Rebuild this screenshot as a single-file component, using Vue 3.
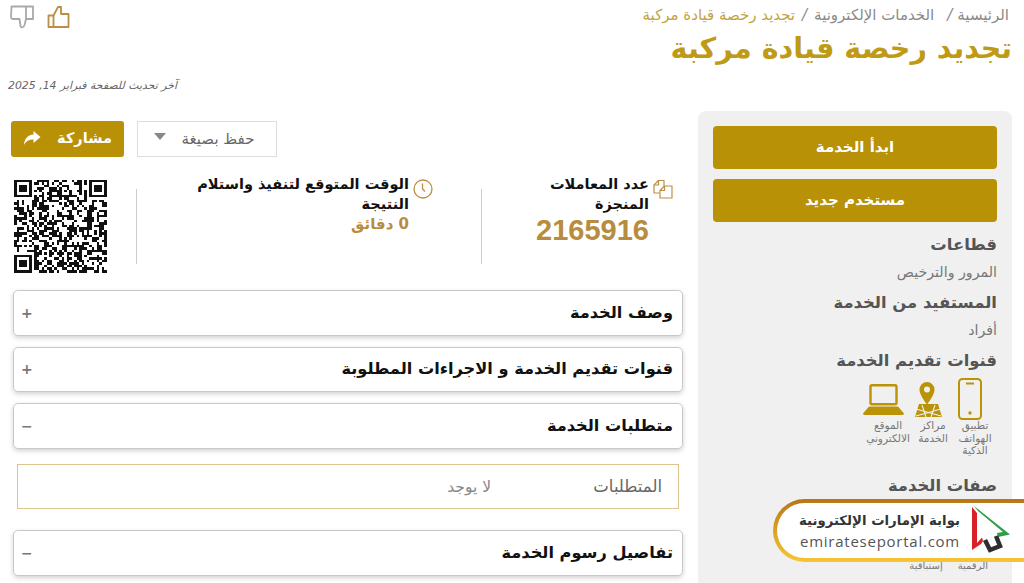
<script setup>
const size = 37
const cells = []
let seed = 20250214
const rnd = () => {
  seed = (seed * 1664525 + 1013904223) >>> 0
  return seed / 4294967296
}
const inFinder = (x, y, ox, oy) => x >= ox - 1 && x <= ox + 7 && y >= oy - 1 && y <= oy + 7
const finderOn = (x, y, ox, oy) => {
  const dx = x - ox
  const dy = y - oy
  if (dx < 0 || dy < 0 || dx > 6 || dy > 6) return false
  if (dx === 0 || dy === 0 || dx === 6 || dy === 6) return true
  return dx >= 2 && dx <= 4 && dy >= 2 && dy <= 4
}
const finders = [[0, 0], [size - 7, 0], [0, size - 7]]
for (let y = 0; y < size; y++) {
  for (let x = 0; x < size; x++) {
    const f = finders.find(([ox, oy]) => inFinder(x, y, ox, oy))
    const on = f ? finderOn(x, y, f[0], f[1]) : rnd() > 0.5
    if (on) cells.push(`M${x} ${y}h1v1h-1z`)
  }
}
const qrPath = cells.join('')

const accordions = [
  { title: 'وصف الخدمة', sign: '+' },
  { title: 'قنوات تقديم الخدمة و الاجراءات المطلوبة', sign: '+' },
  { title: 'متطلبات الخدمة', sign: '−', body: true },
  { title: 'تفاصيل رسوم الخدمة', sign: '−' }
]
</script>

<template>
  <div class="page">
    <header class="top">
      <div class="top-left">
        <div class="thumbs">
          <svg width="24" height="24" viewBox="0 0 24 24" fill="none" stroke="#a9a9a9" stroke-width="1.800" stroke-linejoin="round">
            <path d="M1.500 1.500H23V14H16L14.500 20C13.500 23 11 23 10.500 21L9.500 14H2.500C1.500 14 1 13 1 12Z" />
            <path d="M16 1.500V14" />
          </svg>
          <svg width="24" height="24" viewBox="0 0 24 24" fill="none" stroke="#bb8f45" stroke-width="1.800" stroke-linejoin="round">
            <path d="M1.500 10.500H6.500V22H1.500Z" />
            <path d="M6.500 10.500L11 2H14V9H21.500V22H6.500" />
          </svg>
        </div>
        <p class="updated" dir="rtl">آخر تحديث للصفحة فبراير 14, 2025</p>
      </div>
      <div class="top-right" dir="rtl">
        <nav class="crumbs">
          <span>الرئيسية</span><i>/</i><span class="second">الخدمات الإلكترونية</span><i>/</i><span class="current">تجديد رخصة قيادة مركبة</span>
        </nav>
        <h1>تجديد رخصة قيادة مركبة</h1>
      </div>
    </header>

    <div class="columns">
      <main class="main">
        <div class="actions">
          <button class="share">
            <svg width="18" height="15" viewBox="0 0 18 15" fill="#fff"><path d="M10.500 0L17.500 6l-7 6V8.500C6 8.500 3 10 1 14c.3-6 3.500-10 9.500-10.500z" /></svg>
            <span>مشاركة</span>
          </button>
          <div class="save">
            <span class="caret"></span>
            <span>حفظ بصيغة</span>
          </div>
        </div>

        <section class="stats">
          <svg class="qr" width="93" height="94" :viewBox="`0 0 ${size} ${size}`" shape-rendering="crispEdges"><path :d="qrPath" fill="#111" /></svg>
          <div class="stat time" dir="rtl">
            <svg class="stat-icon" width="20" height="20" viewBox="0 0 20 20" fill="none" stroke="#bb8f45" stroke-width="1.300"><circle cx="10" cy="10" r="9" /><path d="M9.500 4.500v5.500l2.500 2.500" /></svg>
            <div class="stat-text">
              <strong>الوقت المتوقع لتنفيذ واستلام النتيجة</strong>
              <span class="minutes">0 دقائق</span>
            </div>
          </div>
          <div class="stat count" dir="rtl">
            <svg class="stat-icon" width="20" height="20" viewBox="0 0 20 20" fill="none" stroke="#bb8f45" stroke-width="1.200" stroke-linejoin="round"><path d="M6.500 14H1V6L5.500 1.500H11V7" /><path d="M5.500 1.500V6H1" /><path d="M7 11.500L11.500 7H19V19H7Z" /><path d="M11.500 7V11.500H7" /></svg>
            <div class="stat-text">
              <strong>عدد المعاملات المنجزة</strong>
              <span class="number">2165916</span>
            </div>
          </div>
        </section>

        <section class="accordions">
          <template v-for="item in accordions" :key="item.title">
            <div class="acc">
              <span class="sign">{{ item.sign }}</span>
              <h2 dir="rtl">{{ item.title }}</h2>
            </div>
            <div v-if="item.body" class="req" dir="rtl">
              <span class="req-label">المتطلبات</span>
              <span class="req-value">لا يوجد</span>
            </div>
          </template>
        </section>
      </main>

      <aside class="side" dir="rtl">
        <button class="cta">ابدأ الخدمة</button>
        <button class="cta second-cta">مستخدم جديد</button>
        <h3 class="first-h">قطاعات</h3>
        <p>المرور والترخيص</p>
        <h3>المستفيد من الخدمة</h3>
        <p>أفراد</p>
        <h3>قنوات تقديم الخدمة</h3>
        <div class="channels">
          <div class="channel ch-phone">
            <svg width="26" height="42" viewBox="0 0 26 42" fill="none" stroke="#ba9306" stroke-width="2"><rect x="2" y="1" width="22" height="40" rx="3.500" /><path d="M9 5.500h8" /><circle cx="13" cy="35" r="1.700" fill="#ba9306" stroke="none" /></svg>
            <span>تطبيق الهواتف الذكية</span>
          </div>
          <div class="channel ch-pin">
            <svg width="27" height="42" viewBox="0 0 27 42" fill="#ba9306">
              <path d="M4 26H23L27 39H0Z" />
              <path d="M1 31L26 38M26 31L1 38M7 27L11 39M20 27L16 39" stroke="#f0f0f0" stroke-width="1.100" />
              <path fill-rule="evenodd" d="M12 4a7.500 7.500 0 0 1 7.500 7.500C19.500 16.500 15 22 12 27 9 22 4.500 16.500 4.500 11.500A7.500 7.500 0 0 1 12 4zm0 4.500a3 3 0 1 0 0 6 3 3 0 0 0 0-6z" />
            </svg>
            <span>مراكز الخدمة</span>
          </div>
          <div class="channel ch-laptop">
            <svg width="41" height="42" viewBox="0 0 41 42" fill="none"><rect x="7.500" y="7.200" width="26" height="19" rx="1.500" stroke="#ba9306" stroke-width="2.400" /><path d="M6 28.500H35L41 35.500Q41 37 39 37H2Q0 37 0 35.500Z" fill="#ba9306" /></svg>
            <span>الموقع الالكتروني</span>
          </div>
        </div>
        <h3 class="attrs">صفات الخدمة</h3>
        <div class="attr-row">
          <span>الرقمية</span>
          <span>إستباقية</span>
        </div>
      </aside>
    </div>

    <div class="badge" dir="rtl">
      <div class="badge-inner">
        <svg class="badge-mark" width="50" height="60" viewBox="0 0 50 60" fill="none">
          <path d="M9 5L45 33.500L33 36L32 32L38 31L13 10Z" fill="#2f9e44" />
          <path d="M7 6L12 12V42L17 36.500L18 40L16 43L7 49Z" fill="#d92027" />
          <path d="M20 39L25 49L35 45L31 35" stroke="#2e2e2e" stroke-width="4.500" stroke-linejoin="miter" />
        </svg>
        <div class="badge-text">
          <strong>بوابة الإمارات الإلكترونية</strong>
          <span dir="ltr">emirateseportal.com</span>
        </div>
      </div>
    </div>
  </div>
</template>

<style scoped>
.page {
  position: relative;
  width: 1024px;
  height: 583px;
  overflow: hidden;
  background: #fff;
  font-family: "DejaVu Sans", "Noto Sans", sans-serif;
  color: #111;
}
.top {
  display: flex;
  justify-content: space-between;
  padding: 5px 12px 0 8px;
  height: 111px;
  box-sizing: border-box;
}
.thumbs {
  display: flex;
  gap: 13px;
  padding-left: 2px;
}
.updated {
  margin: 50px 0 0;
  font-size: 10.900px;
  line-height: 14px;
  font-style: italic;
  color: #666;
}
.top-right {
  text-align: right;
}
.crumbs {
  font-size: 15px;
  line-height: 20px;
  color: #8a8a8a;
  margin-right: 3px;
}
.crumbs i {
  margin: 0 5px;
}
.crumbs i:last-of-type {
  margin: 0 7px;
}
.crumbs .second {
  margin-right: 8px;
}
.crumbs .current {
  color: #c3a23f;
}
h1 {
  margin: 3px 0 0;
  font-size: 28.600px;
  line-height: 40px;
  font-weight: 700;
  color: #bf9a15;
}
.columns {
  display: flex;
  justify-content: space-between;
  padding: 0 12px 0 10px;
  align-items: flex-start;
}
.main {
  width: 673px;
  padding-top: 10px;
}
.actions {
  display: flex;
  gap: 13px;
  padding-left: 1px;
}
.share {
  width: 113px;
  height: 36px;
  border: 0;
  border-radius: 3px;
  background: #b89106;
  color: #fff;
  font: 700 14.500px "DejaVu Sans", sans-serif;
  display: flex;
  align-items: center;
  justify-content: center;
  gap: 16px;
  padding: 0 0 3px;
}
.share svg {
  margin-top: 2px;
}
.save {
  width: 140px;
  height: 36px;
  box-sizing: border-box;
  border: 1px solid #ddd;
  display: flex;
  align-items: center;
  justify-content: center;
  gap: 16px;
  color: #666;
  font-size: 15px;
  padding-right: 6px;
}
.caret {
  width: 0;
  height: 0;
  border-style: solid;
  border-width: 7px 6.500px 0;
  border-color: #888 transparent transparent;
  margin-top: -6px;
}
.stats {
  display: flex;
  align-items: flex-start;
  margin-top: 22px;
  height: 111px;
  padding-left: 4px;
}
.qr {
  flex: none;
  margin-right: 29px;
}
.stat {
  display: flex;
  gap: 4px;
  margin-top: 10px;
  height: 75px;
  box-sizing: border-box;
}
.stat.time {
  width: 346px;
  padding: 0 48px 0 30px;
  border-left: 1px solid #ccc;
  border-right: 1px solid #ccc;
}
.stat.count {
  flex: 1;
  padding: 0 10px 0 32px;
}
.stat-icon {
  flex: none;
  margin-top: -10px;
}
.stat-text {
  margin-top: -15px;
}
.stat strong {
  display: block;
  font-size: 14.500px;
  line-height: 20px;
}
.minutes {
  display: block;
  font-size: 15px;
  line-height: 20px;
  font-weight: 700;
  color: #b88c3e;
}
.number {
  display: block;
  font: 700 29px/32px "Liberation Sans", sans-serif;
  color: #b88c3e;
}
.accordions {
  padding-left: 3px;
  display: flex;
  flex-direction: column;
}
.acc {
  height: 45.500px;
  box-sizing: border-box;
  display: flex;
  justify-content: space-between;
  align-items: center;
  padding: 0 9px 0 7px;
  border: 1px solid #c8c8c8;
  border-radius: 5px;
  box-shadow: 0 2px 5px rgba(0, 0, 0, 0.18);
  margin-bottom: 11px;
}
.sign {
  font-size: 14px;
  font-weight: 700;
  color: #777;
}
h2 {
  margin: 0;
  font-size: 16.200px;
  line-height: 20px;
  font-weight: 700;
  color: #111;
}
.req {
  margin: 4.500px 4px 21px;
  height: 45px;
  box-sizing: border-box;
  border: 1px solid #dcc48c;
  display: flex;
  align-items: center;
  padding: 0 16px;
}
.req-label {
  width: 171px;
  font-size: 16.500px;
  color: #666;
}
.req-value {
  font-size: 15.500px;
  color: #888;
}
.side {
  width: 314px;
  height: 490px;
  box-sizing: border-box;
  background: #f0f0f0;
  border-radius: 8px 8px 0 0;
  padding: 15px;
}
.cta {
  display: block;
  width: 284px;
  height: 43px;
  border: 0;
  border-radius: 4px;
  background: #b89106;
  color: #fff;
  font: 700 15px "DejaVu Sans", sans-serif;
  padding: 0 0 2px;
}
.second-cta {
  margin-top: 10px;
}
h3 {
  margin: 0;
  font-size: 16.400px;
  line-height: 24px;
  font-weight: 700;
  color: #555;
}
.first-h {
  margin-top: 11px;
}
.side p {
  margin: 4px 0 8px;
  font-size: 14.200px;
  line-height: 22px;
  color: #777;
}
.channels {
  display: flex;
  margin-top: 5px;
}
.channel {
  display: flex;
  flex-direction: column;
  align-items: center;
  text-align: center;
  font-size: 10.500px;
  line-height: 12.500px;
  color: #777;
}
.channel svg {
  flex: none;
  margin: 0 10px -1px 0;
}
.ch-phone { width: 44px; }
.ch-pin { width: 40px; }
.ch-laptop { width: 50px; }
.attrs {
  margin-top: 17px;
}
.attr-row {
  display: flex;
  gap: 15px;
  font-size: 10px;
  line-height: 12px;
  color: #777;
  margin-top: 62px;
  padding-right: 9px;
}
.badge {
  position: absolute;
  left: 773px;
  top: 499px;
  width: 271px;
  height: 63px;
  box-sizing: border-box;
  padding: 4px 0 4px 4px;
  background: linear-gradient(#b5761a, #d99c22 45%, #f7c533);
  border-radius: 32px 0 0 32px;
}
.badge-inner {
  height: 100%;
  background: #fff;
  border-radius: 28px 0 0 28px;
  display: flex;
  align-items: center;
  padding-right: 29px;
}
.badge-mark {
  flex: none;
  margin-left: 5px;
}
.badge-text {
  display: flex;
  flex-direction: column;
  text-align: right;
  color: #333;
}
.badge-text strong {
  font-size: 13.300px;
  line-height: 21px;
  white-space: nowrap;
}
.badge-text span {
  font-size: 15px;
  line-height: 21px;
  letter-spacing: 0.750px;
  color: #555;
  font-family: "Open Sans", "DejaVu Sans", sans-serif;
}
</style>

<style>
html, body { overflow: hidden; }
</style>
